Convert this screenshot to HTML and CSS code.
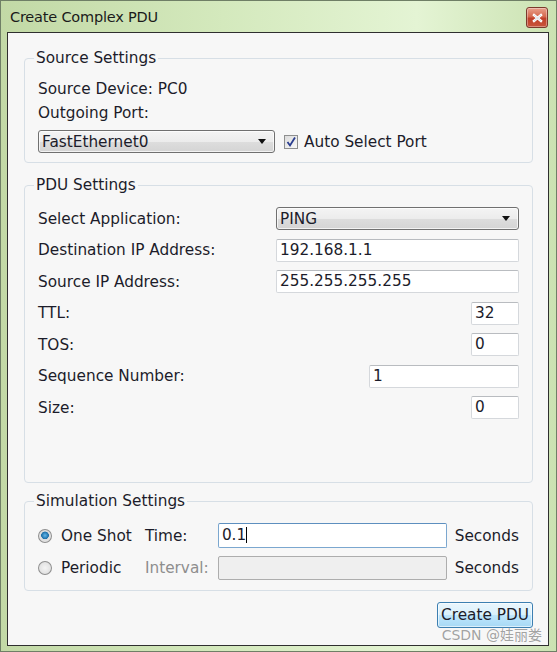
FILE: index.html
```html
<!DOCTYPE html>
<html>
<head>
<meta charset="utf-8">
<link rel="stylesheet" href="styles.css">
</head>
<body>
<div class="window">
  <div class="titlebar">
    <span class="title">Create Complex PDU</span>
    <span class="close"><svg width="11" height="10" viewBox="0 0 11 10"><path d="M2 2 L9 8 M9 2 L2 8" stroke="#fff" stroke-width="2.4" stroke-linecap="square"/><path d="M2 2 L9 8 M9 2 L2 8" stroke="#c9d4de" stroke-width="0.8"/></svg></span>
  </div>
  <div class="client">
    <fieldset class="group source">
      <legend>Source Settings</legend>
      <div class="gbody">
        <div class="line l1">Source Device: PC0</div>
        <div class="line l2">Outgoing Port:</div>
        <div class="portrow">
          <div class="select port"><span>FastEthernet0</span><i class="arrow"></i></div>
          <span class="check"><svg width="12" height="12" viewBox="0 0 12 12"><path d="M2.5 6 L5 9.5 L10 1.5" fill="none" stroke="#2a3d8f" stroke-width="1.8"/></svg></span>
          <span class="lbl">Auto Select Port</span>
        </div>
      </div>
    </fieldset>

    <fieldset class="group pdu">
      <legend>PDU Settings</legend>
      <div class="gbody rows">
        <div class="row"><span class="lbl">Select Application:</span><div class="select app"><span>PING</span><i class="arrow"></i></div></div>
        <div class="row"><span class="lbl">Destination IP Address:</span><div class="field wide">192.168.1.1</div></div>
        <div class="row"><span class="lbl">Source IP Address:</span><div class="field wide">255.255.255.255</div></div>
        <div class="row"><span class="lbl">TTL:</span><div class="field small">32</div></div>
        <div class="row"><span class="lbl">TOS:</span><div class="field small">0</div></div>
        <div class="row"><span class="lbl">Sequence Number:</span><div class="field mid">1</div></div>
        <div class="row"><span class="lbl">Size:</span><div class="field small">0</div></div>
      </div>
    </fieldset>

    <fieldset class="group sim">
      <legend>Simulation Settings</legend>
      <div class="gbody">
        <div class="simrow r1">
          <span class="radio on"></span>
          <span class="opt">One Shot</span>
          <span class="key">Time:</span>
          <div class="field time focus">0.1<span class="caret"></span></div>
          <span class="unit">Seconds</span>
        </div>
        <div class="simrow r2">
          <span class="radio"></span>
          <span class="opt">Periodic</span>
          <span class="key dis">Interval:</span>
          <div class="field time disabled"></div>
          <span class="unit">Seconds</span>
        </div>
      </div>
    </fieldset>

    <div class="actions">
      <div class="button">Create PDU</div>
    </div>
    <div class="watermark">CSDN @娃丽娄</div>
  </div>
</div>
</body>
</html>
```

FILE: styles.css
```css
* { box-sizing: border-box; }
html, body { margin: 0; padding: 0; }
body {
  width: 557px;
  height: 652px;
  overflow: hidden;
  font-family: "DejaVu Sans", Tahoma, sans-serif;
  font-size: 15.3px;
  color: #1c1c2a;
}
.window {
  width: 557px;
  height: 652px;
  background: linear-gradient(90deg, #c2d9a6 0%, #d4e9bd 40%, #e4f4d4 75%, #cbe2b2 100%);
  border: 1px solid #6f7f66;
  display: flex;
  flex-direction: column;
}
.titlebar {
  height: 31px;
  display: flex;
  align-items: center;
  padding: 0 8px 0 9px;
  justify-content: space-between;
}
.title {
  font-size: 14.5px;
  color: #1b1b1b;
  letter-spacing: -0.2px;
}
.close {
  width: 22px;
  height: 21px;
  margin-top: 2px;
  border: 1px solid #7b3a2c;
  border-radius: 3px;
  background: linear-gradient(180deg, #e9a08b 0%, #d56a4f 45%, #c0402a 55%, #c9553c 100%);
  display: flex;
  align-items: center;
  justify-content: center;
  box-shadow: inset 0 0 0 1px rgba(255,255,255,0.35);
}
.client {
  position: relative;
  margin: 0 7px 0 6px;
  height: 614px;
  border: 1px solid #2f2f2f;
  background: #f7f7f7;
  padding: 16px 15px 0 16px;
  display: flex;
  flex-direction: column;
}
.group {
  margin: 0;
  padding: 0;
  border: 1px solid #d7dfe6;
  border-radius: 4px;
  min-width: 0;
}
.group legend {
  margin-left: 9px;
  padding: 0 2px;
  line-height: 18px;
  height: 18px;
}
.gbody { padding: 0 13px; }
.source .gbody { padding-top: 10px; padding-bottom: 9px; }
.line { height: 25px; line-height: 25px; }
.line.l2 { height: 24px; line-height: 22px; }
.portrow {
  margin-top: 4px;
  display: flex;
  align-items: center;
  height: 23px;
}
.select {
  height: 23px;
  border: 1px solid #707070;
  border-radius: 3px;
  background: linear-gradient(180deg, #f4f4f4 0%, #ececec 50%, #dddddd 51%, #d4d4d4 100%);
  display: flex;
  align-items: center;
  justify-content: space-between;
  padding: 0 8px 0 3px;
  box-shadow: inset 0 0 0 1px rgba(255,255,255,0.7);
}
.select.port { width: 237px; }
.select.app { width: 243px; }
.arrow {
  width: 0; height: 0;
  border-left: 4px solid transparent;
  border-right: 4px solid transparent;
  border-top: 5px solid #111;
}
.check {
  margin-left: 9px;
  width: 14px;
  height: 14px;
  border: 1px solid #8e8f8f;
  background: linear-gradient(135deg, #dcdcdc, #f8f8f8);
  display: flex;
  align-items: center;
  justify-content: center;
}
.portrow .lbl { margin-left: 6px; }

.pdu { margin-top: 13px; }
.rows {
  padding-top: 13px;
  padding-bottom: 63px;
  display: flex;
  flex-direction: column;
  gap: 8.5px;
}
.row {
  height: 23px;
  display: flex;
  align-items: center;
  justify-content: space-between;
}
.field {
  height: 23px;
  background: #fff;
  border: 1px solid #d5d8dc;
  border-top-color: #b9bcc0;
  border-radius: 2px;
  padding: 0 3px;
  line-height: 21px;
}
.field.wide { width: 243px; }
.field.small { width: 48px; }
.field.mid { width: 150px; }

.sim { margin-top: 9px; }
.sim .gbody { padding-top: 13px; padding-bottom: 10px; }
.simrow {
  display: flex;
  align-items: center;
  height: 25px;
}
.simrow.r2 { margin-top: 8px; height: 24px; }
.radio {
  width: 14px;
  height: 14px;
  border-radius: 50%;
  border: 1px solid #8f8f8f;
  background: radial-gradient(circle at 50% 50%, #f4f4f4 0%, #dadada 100%);
  display: inline-block;
}
.radio.on {
  background: radial-gradient(circle at 50% 45%, #63b7ea 0%, #1d6fa8 40%, #dcdcdc 46%, #efefef 100%);
}
.opt { margin-left: 9px; width: 84px; }
.key { width: 73px; }
.key.dis { color: #8e8e8e; }
.field.time { width: 229px; height: 25px; line-height: 23px; }
.r2 .field.time { height: 24px; }
.field.focus { border: 1px solid #7ba7cf; border-top-color: #5d8fbf; }
.field.disabled { background: #efefef; border-color: #adadad; }
.caret {
  display: inline-block;
  width: 1px;
  height: 16px;
  background: #000;
  vertical-align: -3px;
}
.unit { margin-left: 8px; }

.actions {
  display: flex;
  justify-content: flex-end;
  margin-top: 11px;
}
.button {
  width: 96px;
  height: 26px;
  border: 1px solid #3c7fb1;
  border-radius: 3px;
  background: linear-gradient(180deg, #eaf6fd 0%, #d9f0fc 50%, #bee6fd 51%, #a7d9f5 100%);
  box-shadow: inset 0 0 0 1px rgba(255,255,255,0.6);
  display: flex;
  align-items: center;
  justify-content: center;
}
.watermark {
  position: absolute;
  right: 6px;
  bottom: 1px;
  font-family: "DejaVu Sans", "Noto Sans CJK SC", sans-serif;
  font-size: 14px;
  color: rgba(150,150,150,0.9);
  text-shadow: 0 0 1px #fff;
}
```
